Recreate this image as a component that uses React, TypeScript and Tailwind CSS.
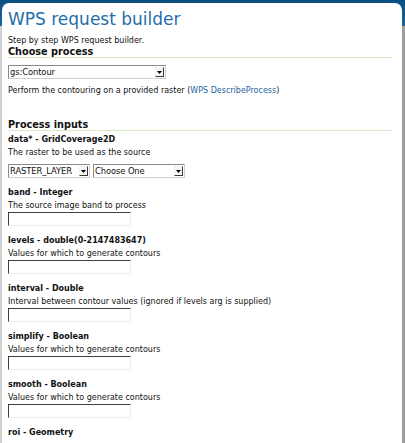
import React from "react";

function FakeSelect({ value, className }: { value: string; className: string }) {
  return (
    <div
      className={
        "flex h-[14px] items-center border border-t-[#8a8a8a] border-l-[#8a8a8a] border-r-[#cfcfcf] border-b-[#cfcfcf] bg-white " +
        className
      }
    >
      <span className="pl-[1px] text-[8.4px] leading-[12px] tracking-[-0.1px] text-[#111] whitespace-nowrap">{value}</span>
      <div className="ml-auto mr-[1px] flex h-[10px] w-[9px] shrink-0 items-center justify-center border border-t-[#f0f0f0] border-l-[#f0f0f0] border-r-[#3a3a3a] border-b-[#3a3a3a] bg-[#f6f6f6]">
        <svg width="5" height="3" viewBox="0 0 5 3">
          <path d="M0 0h5L2.5 3z" fill="#000" />
        </svg>
      </div>
    </div>
  );
}

function Field({ label, desc }: { label: string; desc: string }) {
  return (
    <div className="mt-[8px]">
      <div className="text-[8px] leading-[13px] font-bold text-[#111]">{label}</div>
      <div className="text-[8px] leading-[13px] text-[#111]">{desc}</div>
      <input
        type="text"
        className="block h-[14px] w-[123px] border border-t-[#404040] border-l-[#404040] border-r-[#ececec] border-b-[#ececec] bg-white outline-none"
      />
    </div>
  );
}

export default function App() {
  return (
    <div className="flex h-[443px] w-[405px] flex-col overflow-hidden bg-[linear-gradient(to_bottom,#0a4f80_0px,#1767a0_26px,transparent_26px),linear-gradient(to_right,#d2d2d2_0%,#d2d2d2_50%,#9d9d9d_50%)] font-['DejaVu_Sans',sans-serif] text-[#111]">
      <div className="mt-[3px] ml-[2px] mr-[3px] flex-1 rounded-t-[7px] bg-white pl-[6px] pr-[10px] pt-[6px]">
        <h1 className="text-[17px] leading-[20px] font-normal text-[#1f6eab]">WPS request builder</h1>
        <p className="mt-[6px] text-[8px] leading-[11px]">Step by step WPS request builder.</p>
        <h2 className="border-b border-[#d6e9c0] text-[9.7px] leading-[11px] font-bold">Choose process</h2>
        <div className="mt-[7px]">
          <FakeSelect value="gs:Contour" className="w-[158px]" />
        </div>
        <p className="mt-[5px] text-[8px] leading-[13px]">
          Perform the contouring on a provided raster (
          <a className="text-[#1f64a0]">WPS DescribeProcess</a>)
        </p>

        <h2 className="mt-[22px] border-b border-[#d6e9c0] text-[9.7px] leading-[11px] font-bold">Process inputs</h2>
        <div className="mt-[2px]">
          <div className="text-[8px] leading-[13px] font-bold">data* - GridCoverage2D</div>
          <div className="text-[8px] leading-[13px]">The raster to be used as the source</div>
          <div className="mt-[5px] flex gap-[3px]">
            <FakeSelect value="RASTER_LAYER" className="w-[82px]" />
            <FakeSelect value="Choose One" className="w-[92px]" />
          </div>
        </div>
        <div className="mt-[2px]">
          <Field label="band - Integer" desc="The source image band to process" />
          <Field label="levels - double(0-2147483647)" desc="Values for which to generate contours" />
          <Field label="interval - Double" desc="Interval between contour values (ignored if levels arg is supplied)" />
          <Field label="simplify - Boolean" desc="Values for which to generate contours" />
          <Field label="smooth - Boolean" desc="Values for which to generate contours" />
          <div className="mt-[8px] text-[8px] leading-[13px] font-bold">roi - Geometry</div>
        </div>
      </div>
    </div>
  );
}
